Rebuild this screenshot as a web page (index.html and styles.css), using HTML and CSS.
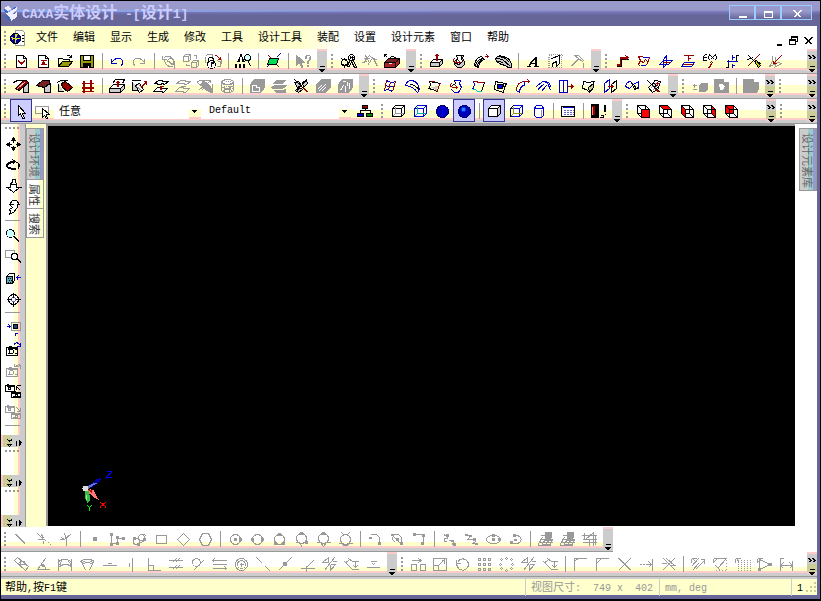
FILE: index.html
```html
<!DOCTYPE html>
<html lang="zh-CN">
<head>
<meta charset="utf-8">
<title>CAXA实体设计 - [设计1]</title>
<link rel="stylesheet" href="styles.css">
</head>
<body>
<svg class="defs" aria-hidden="true">
<symbol id="more" viewBox="-.5 -.5 8 8"><path d="M1 1h5"/><path class="K" d="M1 4h5L4 6H3z"/></symbol>
<symbol id="end" viewBox="-.5 -.5 8 20"><path d="M0 2l2 2-2 2M1 2l2 2-2 2M4 2l2 2-2 2M5 2l2 2-2 2M1 13h5"/><path class="K" d="M1 16h5l-2 2H3z"/></symbol>
<symbol id="vmore" viewBox="-.5 -.5 18 8"><path d="M3 0l2 2 2-2M3 1h4M3 5l2 2 2-2M3 5h4M12 1v5"/><path class="K" d="M15 1v5l2-3z"/></symbol>
</svg>
<header class="title">
<svg class="logo" viewBox="0 0 16 16" aria-hidden="true"><path fill="#eef" d="M1 3l4-2 4 3-4 2zM7 6l7-4v3L9 9zM2 8l5-1 3 3-3 2zM7 12l7-5v5l-6 4z"/><path fill="#36c" d="M1 4l4 2v2L2 7zM2 10l5 3v3l-4-3zM9 4l3-2 1 1-4 2z"/></svg>
<h1><span class="lat">CAXA</span>实体设计<span class="lat"> -[</span>设计<span class="lat">1]</span></h1>
<div class="winbtns">
<button aria-label="最小化"><svg viewBox="-.5 -.5 16 16"><path d="M4 10h8M4 11h8"/></svg></button>
<button aria-label="最大化"><svg viewBox="-.5 -.5 16 16"><path d="M4 5h8v6H4zM4 6h8"/></svg></button>
<button aria-label="关闭"><svg viewBox="-.5 -.5 16 16"><path d="M4 4l7 7M5 4l7 7M11 4l-7 7M12 4l-7 7"/></svg></button>
</div>
</header>

<nav class="menu">
<span class="grip"></span>
<svg class="doc" viewBox="-.5 -.5 16 16" aria-hidden="true"><path class="w g" d="M6 0h7l2 2v13H6z"/><circle cx="6" cy="8" r="5" fill="#009" stroke="#003"/><path fill="#dd3" stroke="none" d="M5 3l3 1-1 3 3 1-3 1-1 4-1-4-3-1 3-1zM1 6l2 1v2z"/><path d="M12 5h2M12 8h2M12 11h2"/></svg>
<button>文件</button><button>编辑</button><button>显示</button><button>生成</button><button>修改</button><button>工具</button><button>设计工具</button><button>装配</button><button>设置</button><button>设计元素</button><button>窗口</button><button>帮助</button>
<div class="docbtns">
<button aria-label="最小化文档"><svg viewBox="-.5 -.5 12 12"><path d="M2 9h5M2 10h5"/></svg></button>
<button aria-label="还原文档"><svg viewBox="-.5 -.5 12 12"><path d="M3 4V1h6v5H7M3 2h6M1 4h6v5H1zM1 5h6"/></svg></button>
<button aria-label="关闭文档"><svg viewBox="-.5 -.5 12 12"><path d="M2 2l7 7M3 2l7 7M9 2l-7 7M10 2l-7 7"/></svg></button>
</div>
</nav>

<div class="row">
<div class="bar" role="toolbar" aria-label="标准"><span class="grip"></span>
<button aria-label="新建设计"><svg viewBox="-.5 -.5 16 16"><path class="w" d="M3 2h7l3 3v9H3zM10 2v3h3"/><path class="r" d="M5 7l3 4 3-4M8 8v3M5 8l3 3M9 8h2"/></svg></button>
<button aria-label="新建图纸"><svg viewBox="-.5 -.5 16 16"><path class="w" d="M3 2h7l3 3v9H3zM10 2v3h3"/><path class="r" d="M5 7h6M7 8v3M8 7v4M9 8v3M5 11h6"/></svg></button>
<button aria-label="打开"><svg viewBox="-.5 -.5 16 16"><path class="y" d="M1 13V5h4l1 1h6v3"/><path class="o" d="M1 13l4-5h10l-4 5z"/><path d="M9 3q2-2 4 0l1 1M14 1v3h-3"/></svg></button>
<button aria-label="保存"><svg viewBox="-.5 -.5 16 16"><path class="o" d="M1 2h13v12H1z"/><path class="w" d="M4 2h7v5H4z"/><path class="K" d="M4 10h7v4H4z"/><path stroke="#fff" d="M9 12v2"/></svg></button>
<i class="sep"></i>
<button aria-label="撤消"><svg viewBox="-.5 -.5 16 16"><path class="b" d="M2 5v5h5M2 9l3-3q5-3 8 1 1 3-2 6M3 8l1 1"/></svg></button>
<button aria-label="重做"><svg viewBox="-.5 -.5 16 16"><path class="g" d="M13 5v5H8M13 9l-3-3Q5 3 2 7q-1 3 2 6M12 8l-1 1"/></svg></button>
<i class="sep"></i>
<button aria-label="更新"><svg viewBox="-.5 -.5 16 16"><path class="g" d="M1 2v4h4M2 5q3-4 8-1l3 4v4M3 7l1 3q3 4 8 3M13 15v-4h-4M5 6l7 6M6 9a3 3 0 1 1 4 2"/></svg></button>
<button aria-label="复制实体"><svg viewBox="-.5 -.5 16 16"><path class="g" d="M0 3l2-2h5v5l-2 2H0zM0 3h5v5M5 3l2-2M8 9l2-2h5v5l-2 2H8zM8 9h5v5M13 9l2-2M10 2h3v3M3 10v2h3"/></svg></button>
<button aria-label="锁定"><svg viewBox="-.5 -.5 16 16"><path class="g" d="M0 3l2-2h5v3M0 3v6M12 8h3v5h-4M11 8l2-2h3v4"/><path class="r" d="M9 2h2l4 4M15 3v3h-3"/><path d="M3 8V5q2-2 5 0v3"/><circle class="w" cx="6" cy="11" r="4"/><path d="M6 9v4M5 9h3M5 10h3"/></svg></button>
<i class="sep"></i>
<button aria-label="查找"><svg viewBox="-.5 -.5 16 16"><path d="M5 1h1v2H5zM4 4L2 9M7 4l2 5M3 6h1v2H3zM7 6h1v2H7zM0 11h1v3H0zM4 11h1v3H4zM8 11h1v3H8zM13 8l2 5"/><circle cx="12" cy="4" r="3" fill="#cff"/></svg></button>
<i class="sep"></i>
<button aria-label="三维球"><svg viewBox="-.5 -.5 16 16"><path class="b" d="M1 14l4-4M11 4l4-4"/><path class="r" d="M3 2l11 12"/><path d="M4 5h9l-2 6H2z" fill="#0d5"/></svg></button>
<i class="sep"></i>
<button aria-label="帮助指针"><svg viewBox="-.5 -.5 16 16"><path class="g G" d="M1 2v10l3-3 2 5h1l-1-5h3z"/><path class="g" d="M10 5V3l2-1h2l1 1v3l-2 2v2M11 5V3M14 3v3l-2 2v2M12 12h1v1h-1z"/></svg></button>
<button class="more" aria-label="更多"><svg><use href="#more"/></svg></button></div>
<div class="bar" role="toolbar" aria-label="智能"><span class="grip"></span>
<button aria-label="齿轮"><svg viewBox="-.5 -.5 16 16"><circle cx="4" cy="9" r="3"/><path d="M4 4v2M4 12v2M0 9h1M7 9h2M1 5l2 2M7 6L5 7M1 13l2-2M7 13l-2-2M9 7l-2 6h2l2-5 3 6h2l-3-7"/><circle cx="11" cy="4" r="3"/><path d="M9 4h4M10 2v3M12 2v5"/></svg></button>
<button aria-label="扳手"><svg viewBox="-.5 -.5 16 16"><path class="g" d="M1 5h6M3 2l4 7M7 2L1 9M8 3l3 2 4 8M9 6l-4 6M10 5l5 1M0 9l5-1"/></svg></button>
<button aria-label="工具箱"><svg viewBox="-.5 -.5 16 16"><path d="M5 5q2-4 7 0M0 1l3 3M0 1h2M0 1v2"/><path d="M0 9l4-4h11l-4 4z" fill="#722"/><path d="M0 9h11v5H0zM11 9l4-4v5l-4 4" fill="#a22"/><path stroke="#eee" d="M4 10h3"/></svg></button>
<button class="more" aria-label="更多"><svg><use href="#more"/></svg></button></div>
<div class="bar" role="toolbar" aria-label="特征"><span class="grip"></span>
<button aria-label="拉伸"><svg viewBox="-.5 -.5 16 16"><path class="w" d="M1 9l3-3h9l-3 3z"/><path class="S" d="M1 9h9v4H1zM10 9l3-3v4l-3 3"/><path class="r" d="M7 7V1M8 7V1M5 3l2-2h1l2 2"/></svg></button>
<button aria-label="旋转"><svg viewBox="-.5 -.5 16 16"><path class="S" d="M5 2h7l-1 3 2 3v3l-3 3H6l-3-3V8l3-3z"/><path class="w" d="M5 2h5v3l1 3-3 3-4-1 2-5z"/><path class="r" d="M3 5q-3 3 2 4h4M7 7l2 2-2 2"/></svg></button>
<button aria-label="扫描"><svg viewBox="-.5 -.5 16 16"><path class="w" d="M1 12q1-8 7-9l3 3q-5 1-6 8z"/><path class="S" d="M4 14q0-7 7-8l-1-1Q3 6 2 12z"/><path class="r" d="M11 3h4M13 1l2 2-2 2"/></svg></button>
<button aria-label="放样"><svg viewBox="-.5 -.5 16 16"><path class="S" d="M0 5q3-4 7-2l4 1q4 2 5 7v3q-3 1-6-2l-4-1q-5-2-6-6z"/><path d="M1 5l6 1 8 7M4 3l6 2 4 4M3 8l5 1"/></svg></button>
<i class="sep"></i>
<button aria-label="文字"><svg viewBox="-.5 -.5 16 16"><path d="M11 3v10M10 4v9M10 4L3 13M9 5L3 12M5 10h5M1 13h4M8 13h5"/></svg></button>
<button aria-label="雕刻"><svg viewBox="-.5 -.5 16 16"><path class="g" stroke-dasharray="1 1" d="M1 1h14M1 2h4M12 2h3M2 3v11M1 3v11M14 3v11M1 14h14"/><path class="w" d="M4 5l8-3v8l-3 3V8l-4 2v3"/></svg></button>
<button aria-label="锤子"><svg viewBox="-.5 -.5 16 16"><path class="g" d="M5 2q3-1 5 1l4 4-1 1-4-3zM8 6l-7 7M9 6l-7 7M13 10h1v4"/></svg></button>
<button class="more" aria-label="更多"><svg><use href="#more"/></svg></button></div>
<div class="bar grow" role="toolbar" aria-label="三维曲线"><span class="grip"></span>
<button aria-label="三维曲线"><svg viewBox="-.5 -.5 16 16"><path d="M2 13h5V6h7"/><path class="r" d="M2 12h4V5h7M2 11h4V4h8M11 2l3 2-3 3"/></svg></button>
<button aria-label="曲面上线"><svg viewBox="-.5 -.5 16 16"><path class="b" d="M6 3q2 2 7 1M4 13q2-2 6-1"/><path class="r" d="M6 3H2l2 4-2 4 2 2M13 4l-3 8M5 8l2 1 2-3 2 2"/></svg></button>
<button aria-label="等参数线"><svg viewBox="-.5 -.5 16 16"><path class="b" d="M1 11l4-4h9l-4 4zM8 2v9l-3 3V6z"/><path class="r" d="M5 9h6"/></svg></button>
<button aria-label="投影线"><svg viewBox="-.5 -.5 16 16"><path class="b" d="M1 13l3-4h10l-3 4z"/><path class="r" d="M3 2h10M8 2v5M7 5h3M3 11h9"/></svg></button>
<button aria-label="公式曲线"><svg viewBox="-.5 -.5 16 16"><path d="M1 7V3l2-2h1M0 4h4M0 7h4M7 1L6 4l1 3M13 1l1 3-1 3M8 2l4 4M12 2L8 6"/><path class="r" d="M5 14h2l2-4V9M7 10l2-2 2 2"/></svg></button>
<button aria-label="桥接"><svg viewBox="-.5 -.5 16 16"><path d="M1 14h3V8M12 7V2h2"/><path class="b" d="M2 8h11M8 1v5M7 4h3M8 14v-4M7 12h3M4 6v4"/></svg></button>
<button aria-label="修剪曲线"><svg viewBox="-.5 -.5 16 16"><path class="r" d="M13 1L1 13"/><path d="M2 2l12 12M1 6l6-2M11 9l4 1"/><path d="M8 8l2-1 4 5-2 2z" fill="#cc0"/></svg></button>
<button aria-label="基准面"><svg viewBox="-.5 -.5 16 16"><path class="g" d="M4 2v6l-3 5 9-4 3 1-7 4M7 3v10"/><path class="r" d="M13 2L5 10M5 7v3h3"/></svg></button>
<button class="more end" aria-label="更多"><svg><use href="#end"/></svg></button></div>
</div>

<div class="row">
<div class="bar" role="toolbar" aria-label="面编辑"><span class="grip"></span>
<button aria-label="圆角"><svg viewBox="-.5 -.5 16 16"><path d="M0 4l4-2h9"/><path class="S" d="M10 9l5-5v10h-5z"/><path class="R" d="M2 10l8-8h3l2 2-9 8z"/><path stroke="#ebb" d="M4 10l8-7"/></svg></button>
<button aria-label="倒角"><svg viewBox="-.5 -.5 16 16"><path class="S" d="M9 9l6-4v9h-6z"/><path d="M1 7l6-5h7v3L9 9z" fill="#722"/></svg></button>
<button aria-label="拔模"><svg viewBox="-.5 -.5 16 16"><path class="S" d="M0 4l3-2h7M1 5v8h5"/><path class="R" d="M4 5l4-2 7 6-5 4-5-4z"/></svg></button>
<button aria-label="筋板"><svg viewBox="-.5 -.5 16 16"><path class="r" d="M4 2v12M5 2v12M11 1v12M12 1v12M2 5h12M2 9h12M2 10h12M2 13h12"/></svg></button>
<i class="sep"></i>
<button aria-label="拉伸面"><svg viewBox="-.5 -.5 16 16"><path class="w" d="M0 10l4-4h11l-4 4zM3 5l3-4h9l-2 4"/><path class="S" d="M0 10h11v4H0zM11 10l4-4v4l-4 4"/><path class="r" d="M8 8V3M9 8V3M7 5l1-2h1l1 2"/></svg></button>
<button aria-label="拔模面"><svg viewBox="-.5 -.5 16 16"><path class="S" d="M0 2h9M1 3v9h8"/><path class="w" d="M4 7l4-2 4 6-4 3z"/><path class="g" d="M5 8l5 4M7 6l4 4"/><path class="r" d="M9 9l6-6M9 10l6-6M12 3h3v3"/></svg></button>
<button aria-label="偏移面"><svg viewBox="-.5 -.5 16 16"><path class="w" d="M1 5l4-3h3l2 1h5l-4 3-2-1-2 1zM0 13l4-4h3l2 1h5l-4 4-2-1H4z"/><path class="r" d="M7 11V7M8 11V7M6 8h4"/></svg></button>
<button aria-label="移动面"><svg viewBox="-.5 -.5 16 16"><path class="g" d="M1 5l4-3h4l2 1h4l-4 3-4-1zM0 13l4-4h3l2 1h5l-4 4-4-1zM5 8h5"/></svg></button>
<button aria-label="删除面"><svg viewBox="-.5 -.5 16 16"><path class="g G" d="M5 3l4 1 6 7-1 3-6-3-4-5z"/><path class="g" d="M0 3l3-1h10v2M2 11l4-3M0 4l12 10M12 3L4 12M15 5v9"/></svg></button>
<button aria-label="圆柱面"><svg viewBox="-.5 -.5 16 16"><path class="g" d="M2 3l4-2h5l3 2v9l-3 2H5l-3-2zM2 4l4 2h4l4-2M5 7v6M10 7v7M3 9l10 3M13 8L4 12"/><path class="g" stroke-dasharray="1 1" d="M3 6h10M4 8h9M4 10h9M6 3h6"/></svg></button>
<i class="sep"></i>
<button aria-label="面组"><svg viewBox="-.5 -.5 16 16"><path class="g G" d="M1 6l4-5h10v8l-4 5H1z"/><path stroke="#fff" d="M3 7h4v2h3v4H3z"/></svg></button>
<button aria-label="分模"><svg viewBox="-.5 -.5 16 16"><path class="g G" d="M2 5l3-3h9l-3 3zM3 12h9l2-1v3H5zM0 9l4-2h11l-4 3H1z"/></svg></button>
<button aria-label="截面"><svg viewBox="-.5 -.5 16 16"><path class="S" d="M1 4l4-1 3 4-4 2zM9 4l4-2 1 3-4 4zM2 12l4-3 3 2-4 3z"/><path d="M1 1l13 13M13 1L2 14"/><path class="r" d="M10 9l5 5M10 10l4 4"/></svg></button>
<button aria-label="抽壳"><svg viewBox="-.5 -.5 16 16"><path class="g G" d="M1 6l5-5h9v8l-5 5H1z"/><path stroke="#fff" d="M3 13l7-7M6 13l4-4M2 11l4-4"/></svg></button>
<button aria-label="合并"><svg viewBox="-.5 -.5 16 16"><path class="g G" d="M1 6l4-5h10v8l-4 5H1z"/><path stroke="#fff" d="M3 12l3-5M8 7v6M10 3v4M5 3h3M12 4v6"/></svg></button>
<button class="more" aria-label="更多"><svg><use href="#more"/></svg></button></div>
<div class="bar" role="toolbar" aria-label="曲面"><span class="grip"></span>
<button aria-label="网格面"><svg viewBox="-.5 -.5 16 16"><path class="b" d="M4 2q4 3 9 1M3 7q5 2 9 1M2 12q4-2 8 1"/><path class="r" d="M4 2L2 12M8 4L6 11M13 3l-3 10"/></svg></button>
<button aria-label="放样面"><svg viewBox="-.5 -.5 16 16"><path class="b" d="M1 7q1-5 7-5 6 2 7 9l-2 3Q9 8 1 7z"/><path d="M5 6q6 0 10 6"/></svg></button>
<button aria-label="直纹面"><svg viewBox="-.5 -.5 16 16"><path d="M3 3l5 1 6 1M2 10l4 1 5 2M3 3q2 4-1 7"/><path class="S" stroke="none" d="M4 9l8-2-2 5z"/><path class="r" d="M14 5q-3 4-3 8M4 3h4"/></svg></button>
<button aria-label="旋转面"><svg viewBox="-.5 -.5 16 16"><path class="b" d="M5 2h7l-1 3 2 4-3 5H6l-3-3"/><path d="M6 2l1 3-3 2"/><path class="r" d="M3 5q-3 3 2 4h4M7 7l2 2-2 2"/></svg></button>
<button aria-label="边界面"><svg viewBox="-.5 -.5 16 16"><path class="r" d="M3 3h3l2 1h6"/><path class="b" d="M3 3q2 4-1 8"/><path stroke="#0cc" d="M2 11h3l2 2h4"/><path d="M14 4l-3 9"/></svg></button>
<button aria-label="填充面"><svg viewBox="-.5 -.5 16 16"><path d="M3 3l4 1 7 1-2 4-1 5-9-3z"/><path class="B" d="M5 6h6l-1 4H5z"/></svg></button>
<button aria-label="导动面"><svg viewBox="-.5 -.5 16 16"><path class="r" d="M2 12Q2 4 9 3h6M13 1l2 2-2 2"/><path class="b" d="M2 12l3 2M5 14q0-6 6-8M9 3l2 3"/></svg></button>
<button aria-label="偏移曲面"><svg viewBox="-.5 -.5 16 16"><path class="b" d="M0 8l6-5 5 1 3 8M2 10l6-5M5 13l5-6M1 12l5-5M8 3l4 1 3 5"/></svg></button>
<button aria-label="延伸面"><svg viewBox="-.5 -.5 16 16"><path class="b" d="M1 2h8v12H1zM5 2v12"/><path class="r" d="M9 8h6M13 6l2 2-2 2M13 6v4"/></svg></button>
<button aria-label="曲面过渡"><svg viewBox="-.5 -.5 16 16"><path d="M3 3l5 1 6-1-3 5-2 6-3-3-4-1z"/><path d="M8 9l5-4v4l-4 5z" fill="#cc9"/></svg></button>
<button aria-label="裁剪面"><svg viewBox="-.5 -.5 16 16"><path class="b" d="M2 5v9l5-4V1z"/><path d="M9 6v8l5-4V2z"/><path class="r" d="M5 8h6M9 6l2 2-2 2"/></svg></button>
<button aria-label="缝合面"><svg viewBox="-.5 -.5 16 16"><path class="b" d="M1 8q1-5 5-5l3 3-4 4zM9 6l5-3v7"/><path d="M7 4l3 7 4-2M9 6l3 4"/></svg></button>
<button aria-label="还原面"><svg viewBox="-.5 -.5 16 16"><path class="w" d="M8 2l6 1-2 6-6-2zM2 9l5-5 5 6-6 4z"/><path d="M1 2l13 12"/><path class="g" d="M4 10l5-5M6 12l5-5"/><path class="r" d="M9 5h4M8 10l5 4M11 3v4"/></svg></button>
<button class="more" aria-label="更多"><svg><use href="#more"/></svg></button></div>
<div class="bar" role="toolbar" aria-label="布尔"><span class="grip"></span>
<button aria-label="加减"><svg viewBox="-.5 -.5 16 16"><path class="g" d="M1 7h4M3 5v4M1 11h4"/><path class="g G" d="M8 7l2-2h6v6l-2 2H8z"/></svg></button>
<button aria-label="求差"><svg viewBox="-.5 -.5 16 16"><path class="g G" d="M1 1h9v3h5v10H1z"/><path class="w" stroke="#fff" d="M6 6h3l2 2-2 3H7z"/></svg></button>
<i class="sep"></i>
<button aria-label="求和"><svg viewBox="-.5 -.5 16 16"><path class="g G" d="M0 1h10v3h5v7l-2 3H0z"/></svg></button>
<button class="more end" aria-label="更多"><svg><use href="#end"/></svg></button></div>
<div class="bar grow" role="toolbar" aria-label="附加"><span class="grip"></span><button class="more end" aria-label="更多"><svg><use href="#end"/></svg></button></div>
</div>

<div class="row">
<div class="bar pick" role="toolbar" aria-label="选择"><span class="grip"></span>
<button class="on" aria-label="选择"><svg viewBox="-.5 -.5 16 16"><path class="w" d="M5 2v10l2-2 2 5h2l-2-5h3z"/></svg></button>
<button aria-label="框选"><svg viewBox="-.5 -.5 16 16"><path class="g" d="M0 3h13v7H0z"/><path class="w" d="M7 5v9l2-2 2 3h1l-1-4h3z"/></svg></button>
<select class="combo" aria-label="选择过滤"><option>任意</option></select>
<select class="combo lat" aria-label="样式"><option>Default</option></select>
<button aria-label="设计树"><svg viewBox="-.5 -.5 16 16"><path d="M8 5v2M3 10V7h10v3"/><path class="R" d="M5 2h5v3H5z"/><path class="B" d="M0 10h6v3H0z"/><path d="M9 10h6v3H9z" fill="#080"/></svg></button>
</div>
<div class="bar" role="toolbar" aria-label="显示"><span class="grip"></span>
<button aria-label="线框"><svg viewBox="-.5 -.5 16 16"><path class="w" d="M2 5l3-3h9v8l-3 3H2zM2 5h9v8M11 5l3-3"/><path class="g" d="M5 3v7h8M5 10l-3 3"/></svg></button>
<button aria-label="隐藏线"><svg viewBox="-.5 -.5 16 16"><path class="w b" d="M2 5l3-3h9v8l-3 3H2zM2 5h9v8M11 5l3-3"/><path stroke="#0aa" d="M5 3v7h8M5 10l-3 3"/></svg></button>
<button aria-label="着色"><svg viewBox="-.5 -.5 16 16"><circle cx="8" cy="8" r="6" fill="#00b" stroke="#006"/><path stroke="#00f" d="M8 3v10"/></svg></button>
<button class="on" aria-label="光滑着色"><svg viewBox="-.5 -.5 16 16"><circle cx="8" cy="8" r="6" fill="#00b" stroke="#006"/><circle cx="7" cy="6" r="2" fill="#28f" stroke="#03e"/></svg></button>
<i class="sep"></i>
<button class="on" aria-label="实体"><svg viewBox="-.5 -.5 16 16"><path class="w" d="M2 5l3-3h9v8l-3 3H2z"/><path class="S" d="M11 5l3-3v8l-3 3z"/><path d="M2 5h9"/></svg></button>
<button aria-label="透视"><svg viewBox="-.5 -.5 16 16"><path class="w b" d="M2 5l3-3h9v8l-3 3H2zM2 5h9v8M11 5l3-3"/><path stroke="#990" d="M5 3v7h8M5 10l-3 3"/><path d="M2 13V5l3-3"/></svg></button>
<button aria-label="圆柱"><svg viewBox="-.5 -.5 16 16"><path class="w b" d="M4 4l2-2h5l2 2v8l-2 2H6l-2-2zM4 4l2 1h5l2-1"/><path class="g" d="M11 6v7"/></svg></button>
<i class="sep"></i>
<button aria-label="属性表"><svg viewBox="-.5 -.5 16 16"><path class="w" d="M1 3h13v10H1z"/><path class="b" d="M2 4h11"/><path stroke="#66c" stroke-dasharray="2 1" d="M3 7h10M3 9h10M3 11h10"/></svg></button>
<i class="sep"></i>
<button aria-label="渲染"><svg viewBox="-.5 -.5 16 16"><path class="K" d="M1 1h7v13H1z"/><path class="R" d="M1 2h4v10H1z"/><path d="M9 14h4M10 12h3v2M14 1v7M15 1v7M14 11h1"/><path stroke="#f88" d="M2 3v8"/></svg></button>
<button class="more" aria-label="更多"><svg><use href="#more"/></svg></button></div>
<div class="bar view" role="toolbar" aria-label="视向"><span class="grip"></span>
<button aria-label="前视"><svg viewBox="-.5 -.5 16 16"><path class="w" d="M2 2h8l4 4v8H6l-4-4zM2 2l4 4h8M6 6v8M10 2v8H2M10 10l4 4"/><path class="F" d="M6 6h8v8H6z"/></svg></button>
<button aria-label="俯视"><svg viewBox="-.5 -.5 16 16"><path class="w" d="M2 2h8l4 4v8H6l-4-4zM6 6v8M10 2v8H2M10 10l4 4"/><path class="F" d="M2 2h8l4 4H6z"/></svg></button>
<button aria-label="左视"><svg viewBox="-.5 -.5 16 16"><path class="w" d="M2 2h8l4 4v8H6l-4-4zM6 6h8M10 2v8H2M10 10l4 4"/><path class="F" d="M2 2l4 4v8l-4-4z"/></svg></button>
<button aria-label="右视"><svg viewBox="-.5 -.5 16 16"><path class="w" d="M2 2h8l4 4v8H6l-4-4zM10 10H2"/><path class="F" d="M10 2l4 4v8l-4-4z"/><path d="M2 2l4 4h8M6 6v8"/></svg></button>
<button aria-label="后视"><svg viewBox="-.5 -.5 16 16"><path class="w" d="M2 2h8l4 4v8H6l-4-4z"/><path class="F" d="M2 2h8v8H2z"/><path d="M2 2l4 4h8M6 6v8M10 10l4 4"/></svg></button>
<button class="more end" aria-label="更多"><svg><use href="#end"/></svg></button></div>
<div class="bar grow" role="toolbar" aria-label="附加视图"><span class="grip"></span><button class="more end" aria-label="更多"><svg><use href="#end"/></svg></button></div>
</div>

<div class="work">
<div class="side">
<div class="vbar" role="toolbar" aria-label="视图"><span class="vgrip"></span>
<button aria-label="平移"><svg viewBox="-.5 -.5 16 16"><path class="K" d="M8 1l2 3H6zM8 14l2-3H6zM1 8l3-2v4zM15 8l-3-2v4z"/><path d="M8 4v2M8 9v2M4 8h2M10 8h2"/></svg></button>
<button aria-label="旋转视图"><svg viewBox="-.5 -.5 16 16"><path d="M10 12q-9 0-9-4 1-4 8-4 6 1 5 5l-2 2M10 11q-8 0-8-3 1-3 7-3M7 2l3 2-3 3M13 6v5"/></svg></button>
<button aria-label="前后缩放"><svg viewBox="-.5 -.5 16 16"><path class="w" d="M7 1h3v3l1 1v4h3l-6 5-6-5h3V5l2-1zM0 9h3M13 9h3M5 6h6"/></svg></button>
<button aria-label="行走"><svg viewBox="-.5 -.5 16 16"><path class="w" d="M4 5l3-4h4l3 4h-2q1 3-2 5l-1 2-5 3 1-3-1-2 3-2-2-2q1-2 3-1z"/></svg></button>
<i class="vsep"></i>
<button aria-label="缩放"><svg viewBox="-.5 -.5 16 16"><circle cx="5" cy="5" r="4" fill="#cff"/><path d="M8 8l6 6M9 8l5 5"/></svg></button>
<button aria-label="窗口缩放"><svg viewBox="-.5 -.5 16 16"><path class="g" d="M0 1h9v7H0z"/><circle class="w" cx="9" cy="7" r="3"/><path d="M11 9l5 5M12 9l4 4"/></svg></button>
<button aria-label="指定面"><svg viewBox="-.5 -.5 16 16"><path class="w" d="M1 6l3-3h5v7l-2 3H1z"/><path d="M1 6h6v7H1z" fill="#5ab"/><path stroke-dasharray="1 1" d="M2 8h5M3 10h4M2 12h5"/><path class="b" d="M15 7h-4M13 5l-2 2 2 2M12 6v3"/></svg></button>
<button aria-label="对准"><svg viewBox="-.5 -.5 16 16"><circle class="w" cx="8" cy="8" r="5"/><circle cx="8" cy="8" r="2" stroke="#66a"/><path d="M8 1v5M8 10v5M1 8h5M10 8h5"/></svg></button>
<i class="vsep"></i>
<button aria-label="适应窗口"><svg viewBox="-.5 -.5 16 16"><path class="g" d="M6 2h9v8H6z"/><path d="M8 4h4v4H8z" fill="#246"/><path class="b" d="M1 6h4M3 4l2 2-2 2M10 15v-3M9 13h3"/></svg></button>
<button aria-label="下一视图"><svg viewBox="-.5 -.5 16 16"><path d="M1 6h11v8H1zM3 5h3M2 7h9M2 8h2M9 8h2M2 12h2M9 12h2"/><circle cx="6" cy="10" r="2"/><path class="b" d="M8 4q2-4 5-2l2 2M15 1v4h-4"/></svg></button>
<button aria-label="上一视图"><svg viewBox="-.5 -.5 16 16"><path class="g" d="M1 6h11v8H1zM3 5h3M2 7h9M2 12h2M9 12h2M15 7q1-4-2-5l-3 2M9 1v3h4"/><circle class="g" cx="6" cy="10" r="2"/></svg></button>
<button aria-label="保存视图"><svg viewBox="-.5 -.5 16 16"><path d="M0 2h9v6H0zM1 1h2M1 3h7M11 2h4M11 2v4M11 3l4 4"/><path class="w" d="M6 9h9v5H6z"/><path d="M6 10h9M7 8h3M7 13h2M12 13h2"/><circle cx="4" cy="5" r="1"/><circle cx="11" cy="12" r="1"/></svg></button>
<button aria-label="恢复视图"><svg viewBox="-.5 -.5 16 16"><path class="g" d="M0 2h9v6H0zM1 1h2M1 3h7M11 3l4 4M15 3v4h-4M6 9h9v5H6zM6 10h9M7 13h2"/><circle class="g" cx="4" cy="5" r="1"/><circle class="g" cx="11" cy="12" r="1"/></svg></button>
<i class="vsep"></i>
<button class="vmore" aria-label="更多"><svg><use href="#vmore"/></svg></button></div>
<div class="vbar short" role="toolbar" aria-label="空栏一"><span class="vgrip"></span><button class="vmore" aria-label="更多"><svg><use href="#vmore"/></svg></button></div>
<div class="vbar short" role="toolbar" aria-label="空栏二"><span class="vgrip"></span><button class="vmore" aria-label="更多"><svg><use href="#vmore"/></svg></button></div>
</div>
<div class="tabs left"><button class="sel">设计环境</button><button>属性</button><button>搜索</button></div>
<main class="canvas">
<svg class="triad" viewBox="-.5 -.5 32 42" role="img" aria-label="坐标轴"><g stroke="none"><path d="M5 17l8-5 1-2 6-2-2 4-5 4-8 4z" fill="#00a"/><path d="M5 17l8-4 2 1-8 5z" fill="#67c"/><path d="M7 19l5 2 5 9-5-2-4-4z" fill="#f77"/><path d="M7 19l3 2 1 3-4-3z" fill="#d00"/><path d="M3 20h4l2 10-3 4-3-6z" fill="#3b4"/><path d="M4 21l1 9h1z" fill="#9e9"/><circle cx="4" cy="19" r="3" fill="#ddd"/></g><path stroke="#00f" d="M25 2h5v1l-5 4v1h5"/><path stroke="#f00" d="M19 32v1l5 4v1M24 32v1l-5 4v1"/><path stroke="#0f0" d="M6 35v1l2 2 2-2v-1M8 38v3"/></svg>
</main>
<div class="tabs right"><button class="sel">设计元素库</button></div>
</div>

<div class="row low">
<div class="bar dim" role="toolbar" aria-label="绘制"><span class="grip"></span>
<button aria-label="直线"><svg viewBox="-.5 -.5 16 16"><path d="M2 3l10 10M3 3l9 9"/></svg></button>
<button aria-label="切线"><svg viewBox="-.5 -.5 16 16"><path d="M2 2l6 6H2M8 8l3 1M6 3l2 4M8 9v3M12 11h1M14 13h1"/></svg></button>
<button aria-label="法线"><svg viewBox="-.5 -.5 16 16"><path d="M2 8h5l7-6M7 2l2 6v6M4 6l3 2"/></svg></button>
<i class="sep"></i>
<button aria-label="点"><svg viewBox="-.5 -.5 16 16"><path class="G" d="M6 6h3v3H6z"/></svg></button>
<button aria-label="连续线"><svg viewBox="-.5 -.5 16 16"><path class="G" d="M1 2h2v2H1zM1 12h2v2H1zM7 11h2v2H7zM7 5h2v2H7zM13 6h2v2h-2z"/><path d="M2 4v8M3 12h4M8 7v4M9 7h4"/></svg></button>
<button aria-label="双切圆"><svg viewBox="-.5 -.5 16 16"><circle cx="5" cy="10" r="3"/><circle cx="10" cy="6" r="3"/><path d="M9 3h4l2 2M8 11l5-1"/><path class="G" d="M2 6h2v2H2zM6 12h2v2H6zM12 7h2v2h-2z"/></svg></button>
<button aria-label="矩形"><svg viewBox="-.5 -.5 16 16"><path d="M3 4h10v8H3z"/></svg></button>
<button aria-label="菱形"><svg viewBox="-.5 -.5 16 16"><path d="M8 2l6 6-6 6-6-6z"/></svg></button>
<button aria-label="多边形"><svg viewBox="-.5 -.5 16 16"><path d="M5 2h6l3 6-3 6H5L2 8z"/></svg></button>
<i class="sep"></i>
<button aria-label="圆"><svg viewBox="-.5 -.5 16 16"><circle cx="8" cy="8" r="5"/><path class="G" d="M7 7h2v2H7zM12 7h2v2h-2z"/></svg></button>
<button aria-label="两点圆"><svg viewBox="-.5 -.5 16 16"><circle cx="8" cy="8" r="5"/><path class="G" d="M2 7h2v2H2zM12 7h2v2h-2z"/></svg></button>
<button aria-label="三点圆"><svg viewBox="-.5 -.5 16 16"><circle cx="8" cy="8" r="5"/><path class="G" d="M7 2h2v2H7zM3 11h2v2H3zM11 11h2v2h-2z"/></svg></button>
<button aria-label="一切两点圆"><svg viewBox="-.5 -.5 16 16"><circle cx="8" cy="7" r="5"/><path class="G" d="M7 1h2v2H7zM12 10h2v2h-2z"/><path d="M2 11h3l3 3v1"/></svg></button>
<button aria-label="两切一点圆"><svg viewBox="-.5 -.5 16 16"><circle cx="8" cy="7" r="5"/><path class="G" d="M7 1h2v2H7z"/><path d="M1 11h4l3 4 3-4h4"/></svg></button>
<button aria-label="三切圆"><svg viewBox="-.5 -.5 16 16"><circle cx="8" cy="8" r="5"/><path d="M4 1l2 2h4l2-2M1 12h4l1 2h4l1-2h4"/></svg></button>
<i class="sep"></i>
<button aria-label="圆弧"><svg viewBox="-.5 -.5 16 16"><path class="G" d="M2 6h2v1H2zM11 11h2v2h-2z"/><path d="M3 3h6l3 3v5"/></svg></button>
<button aria-label="半圆弧"><svg viewBox="-.5 -.5 16 16"><path d="M3 4l8 8M4 3h5l3 3v5M3 5v3l3 3"/><path class="G" d="M2 3h2v1H2zM11 11h2v2h-2zM7 7h2v2H7z"/></svg></button>
<button aria-label="三点弧"><svg viewBox="-.5 -.5 16 16"><path d="M3 3h8l1 1v7"/><path class="G" d="M2 2h2v2H2zM11 3h2v2h-2zM10 11h2v2h-2z"/></svg></button>
<i class="sep"></i>
<button aria-label="样条"><svg viewBox="-.5 -.5 16 16"><path d="M3 2v2h3v3H3v3h2M7 9h3l2 1-1 3h2"/><path class="G" d="M5 3h2v2H5zM10 9h2v1h-2zM12 12h2v2h-2z"/></svg></button>
<button aria-label="B样条"><svg viewBox="-.5 -.5 16 16"><path d="M3 3l4 2-3 3h6l2 2-3 2h3"/><path class="G" d="M2 3h2v1H2zM10 7h2v2h-2zM12 12h2v1h-2zM7 4h1v1H7z"/></svg></button>
<button aria-label="椭圆"><svg viewBox="-.5 -.5 16 16"><ellipse cx="8" cy="8" rx="7" ry="4"/><path class="G" d="M7 3h2v2H7zM7 7h2v2H7zM13 7h2v2h-2z"/></svg></button>
<button aria-label="椭圆弧"><svg viewBox="-.5 -.5 16 16"><path d="M7 4h3q5 2 3 6-4 4-9 1"/><path class="G" d="M6 3h2v2H6zM3 10h2v2H3zM7 8h2v1H7z"/></svg></button>
<i class="sep"></i>
<button aria-label="投影"><svg viewBox="-.5 -.5 16 16"><path class="G" d="M8 1h6v5l-3 2-3-2z"/><path d="M3 4h4M2 8h13M1 11h14M0 14h13M0 14l5-8M4 14l5-8M8 14l5-8M12 14l3-6M6 9h7M5 13h7"/></svg></button>
<button aria-label="相关投影"><svg viewBox="-.5 -.5 16 16"><path class="G" d="M8 1h6v5l-3 2-3-2z"/><path d="M3 4h4M2 8h13M1 11h14M0 14h13M0 14l5-8M4 14l5-8M8 14l5-8M12 14l3-6M6 9h7M5 13h7"/></svg></button>
<button aria-label="构造线"><svg viewBox="-.5 -.5 16 16"><path d="M0 4h15M3 1v7M12 0v14M1 8h14M1 11h14M4 8l8-7M8 8v6M14 4v9"/></svg></button>
<button class="more" aria-label="更多"><svg><use href="#more"/></svg></button></div>
<div class="blank"></div>
</div>

<div class="row low">
<div class="bar dim" role="toolbar" aria-label="约束"><span class="grip"></span>
<button aria-label="智能标注"><svg viewBox="-.5 -.5 16 16"><path d="M1 4l3-3 11 9-3 4zM7 5h4v3H7zM5 7l2-2"/></svg></button>
<button aria-label="角度约束"><svg viewBox="-.5 -.5 16 16"><path d="M10 2L2 13h12M6 7q4 2 4 6M5 9l4 1"/></svg></button>
<button aria-label="弧长约束"><svg viewBox="-.5 -.5 16 16"><path d="M1 2v12M14 2v12M1 5q6-4 13 0M2 10q6-4 12 0M4 5L2 8l3 1M11 5l3 3-3 1"/></svg></button>
<button aria-label="弧角约束"><svg viewBox="-.5 -.5 16 16"><path d="M1 5q6-5 14 0M3 8q5-4 10 0M2 5l4 9M14 5l-4 9M2 8l2-3 3 1M14 8l-2-3-3 1"/></svg></button>
<button aria-label="水平约束"><svg viewBox="-.5 -.5 16 16"><path d="M1 9h14M6 7h4"/></svg></button>
<button aria-label="竖直约束"><svg viewBox="-.5 -.5 16 16"><path d="M9 1v14M6 6v4"/></svg></button>
<button aria-label="垂直约束"><svg viewBox="-.5 -.5 16 16"><path d="M3 1v13h12M3 9h5v5"/></svg></button>
<button aria-label="平行约束"><svg viewBox="-.5 -.5 16 16"><path d="M1 4h14M1 11h14M5 6l4-4M8 6l4-4M5 13l4-4M8 13l4-4"/></svg></button>
<button aria-label="相切约束"><svg viewBox="-.5 -.5 16 16"><circle cx="7" cy="6" r="4"/><path d="M14 4L4 14"/></svg></button>
<button aria-label="等长约束"><svg viewBox="-.5 -.5 16 16"><path d="M1 4h14M1 8h14M1 12h14M3 2L1 4l2 2M13 10l2 2-2 2"/></svg></button>
<button aria-label="同心约束"><svg viewBox="-.5 -.5 16 16"><circle cx="8" cy="8" r="6"/><circle cx="8" cy="8" r="4"/><path d="M8 6v4M6 8h4"/></svg></button>
<button aria-label="共线约束"><svg viewBox="-.5 -.5 16 16"><path d="M1 1l6 6M10 10l5 5"/></svg></button>
<button aria-label="重合约束"><svg viewBox="-.5 -.5 16 16"><path d="M14 1L1 14"/><path class="G" d="M6 6h3v3H6z"/></svg></button>
<button aria-label="中点约束"><svg viewBox="-.5 -.5 16 16"><path d="M1 12h14M14 4l-8 8M7 9v6"/></svg></button>
<button aria-label="镜像约束"><svg viewBox="-.5 -.5 16 16"><path d="M13 1L3 14M1 6h6V1zM9 8h5M9 8v6l5-6M11 5h4"/></svg></button>
<button aria-label="偏移约束"><svg viewBox="-.5 -.5 16 16"><path d="M1 5l8 8h6M5 2l4 3h6M12 5v6M10 9l2 2 2-2M6 3l-4 4M3 4v3"/></svg></button>
<button aria-label="固定"><svg viewBox="-.5 -.5 16 16"><path d="M1 11h13M5 5h6M7 7l1 1 1-1"/></svg></button>
<button class="more" aria-label="更多"><svg><use href="#more"/></svg></button></div>
<div class="bar dim grow" role="toolbar" aria-label="修改"><span class="grip"></span>
<button aria-label="移动"><svg viewBox="-.5 -.5 16 16"><path d="M1 8h5v6H1zM10 8h5v6h-5zM1 4h9M8 2l3 2-3 2"/></svg></button>
<button aria-label="缩放曲线"><svg viewBox="-.5 -.5 16 16"><path d="M1 2h13v12H1zM1 9h5v5M6 9l6-6M9 4h3v3"/></svg></button>
<button aria-label="旋转曲线"><svg viewBox="-.5 -.5 16 16"><path d="M2 3v4h4M3 6q3-5 8-3 5 4 2 8-4 5-9 1l-2-4"/></svg></button>
<button aria-label="线性阵列"><svg viewBox="-.5 -.5 16 16"><path d="M2 2h2v2H2zM7 2h2v2H7zM12 2h2v2h-2zM2 7h2v2H2zM7 7h2v2H7zM12 7h2v2h-2zM2 12h2v2H2zM7 12h2v2H7zM12 12h2v2h-2z"/></svg></button>
<button aria-label="圆形阵列"><svg viewBox="-.5 -.5 16 16"><path d="M7 2l1-1 1 1-1 1zM12 3l1-1 1 1-1 1zM13 8l1-1 1 1-1 1zM12 12l1-1 1 1-1 1zM7 14l1-1 1 1-1 1zM2 12l1-1 1 1-1 1zM1 8l1-1 1 1-1 1zM2 3l1-1 1 1-1 1z"/></svg></button>
<button aria-label="镜像"><svg viewBox="-.5 -.5 16 16"><path d="M13 1L3 14M1 6h6V1zM9 8h5M9 8v6l5-6M11 5h4"/></svg></button>
<button aria-label="偏移"><svg viewBox="-.5 -.5 16 16"><path d="M1 5l8 8h6M5 2l4 3h6M12 5v6M10 9l2 2 2-2M6 3l-4 4M3 4v3"/></svg></button>
<i class="sep"></i>
<button aria-label="圆角过渡"><svg viewBox="-.5 -.5 16 16"><path d="M2 14V2h12M2 7q0-5 6-5"/></svg></button>
<button aria-label="倒角过渡"><svg viewBox="-.5 -.5 16 16"><path d="M2 14V2h12M2 7l5-5"/></svg></button>
<button aria-label="裁剪"><svg viewBox="-.5 -.5 16 16"><path d="M2 2l12 12M3 2l12 12M14 2L2 14"/></svg></button>
<button aria-label="延伸"><svg viewBox="-.5 -.5 16 16"><path d="M14 2v12M9 8h4M10 5l3 3-3 3"/><path stroke-dasharray="2 1" d="M1 8h8"/></svg></button>
<button aria-label="打断"><svg viewBox="-.5 -.5 16 16"><path d="M3 2l12 12M14 2L2 14M1 7h5M6 2l8 7M10 9h5"/></svg></button>
<i class="sep"></i>
<button aria-label="显示端点"><svg viewBox="-.5 -.5 16 16"><path d="M1 2h5M1 2v4M1 10L8 2M5 13l9-9M10 3h4v4M2 14l6-7M3 3l3 3"/></svg></button>
<button aria-label="显示尺寸"><svg viewBox="-.5 -.5 16 16"><path d="M1 2h13L5 12M1 2v4l3-3M3 9l5 5"/><path stroke-dasharray="1 2" d="M14 3v11H3"/></svg></button>
<button aria-label="栅格"><svg viewBox="-.5 -.5 16 16"><path d="M1 2h5M1 2v4M2 2l3 4"/><path stroke-dasharray="1 2" d="M6 4h10M3 6h13M3 8h13M3 10h13M3 12h13M3 14h13"/></svg></button>
<button aria-label="捕捉"><svg viewBox="-.5 -.5 16 16"><path d="M1 2h5M1 2v4l3-3M3 3l11 5-11 5V4"/><path class="G" d="M12 7h3v2h-3zM2 12h2v2H2z"/></svg></button>
<button aria-label="尺寸"><svg viewBox="-.5 -.5 16 16"><path d="M1 2h4M2 2v12M14 4v10M2 9h12M5 6L2 9l3 3M11 6l3 3-3 3"/></svg></button>
<button class="more end" aria-label="更多"><svg><use href="#end"/></svg></button></div>
</div>

<footer class="status">
<span class="hint">帮助<span class="lat">,</span>按<span class="lat">F1</span>键</span>
<span class="cell size">视图尺寸<span class="lat">:&nbsp; 749 x&nbsp; 402</span></span>
<span class="cell unit"><span class="lat">mm, deg</span></span>
<span class="cell num"><span class="lat">1</span></span>
<svg class="corner" viewBox="0 0 12 12" aria-hidden="true"><path fill="#cc9" stroke="none" d="M9 1h2v2H9zM5 5h2v2H5zM9 5h2v2H9zM1 9h2v2H1zM5 9h2v2H5zM9 9h2v2H9z"/></svg>
</footer>
</body>
</html>
```
FILE: styles.css
```css
* { box-sizing: border-box; }

html { height: 100%; background: #000; }

body {
  margin: 0;
  height: 100%;
  display: flex;
  flex-direction: column;
  overflow: hidden;
  border: solid #000;
  border-width: 1px 1px 2px;
  background: #fff;
  color: #000;
  font: 11px/14px "Noto Sans CJK SC", sans-serif;
  box-shadow: inset -3px 0 #669, inset 0 -4px #669;
  padding: 0 3px 4px 0;
}

button {
  margin: 0;
  padding: 0;
  border: 0;
  background: none;
  color: inherit;
  font: inherit;
}

svg {
  display: block;
  overflow: visible;
  fill: none;
  stroke: #000;
  shape-rendering: crispEdges;
}
.defs { position: absolute; width: 0; height: 0; }

.lat { font-family: "Liberation Mono", monospace; font-size: 10px; }

/* icon colours: lower case strokes, upper case fills */
.r { stroke: #900; }
.b { stroke: #00c; }
.g { stroke: #999; }
.w { fill: #fff; }
.K { fill: #000; }
.R { fill: #900; }
.B { fill: #00c; }
.G { fill: #999; }
.S { fill: #ccc; }
.F { fill: #f00; }
.o { fill: #990; }
.y { fill: #ffc; }

/* title bar */
.title {
  flex: none;
  height: 25px;
  margin-right: -3px;
  padding: 0 8px 2px 2px;
  display: flex;
  align-items: center;
  background:
    linear-gradient(90deg, #8ae, #99c0 70%) 0 9px / 100% 2px no-repeat,
    linear-gradient(#99c 9px, #77b 11px, #669 14px);
  color: #ccf;
}
.logo { width: 16px; height: 16px; stroke: none; }
.title h1 {
  flex: 1;
  margin: 0 0 0 3px;
  font-size: 16px;
  line-height: 20px;
  font-weight: 700;
  white-space: pre;
}
.title .lat { font-size: 13px; }
.winbtns { display: flex; }
.winbtns button {
  width: 26px;
  height: 15px;
  display: grid;
  place-items: center;
  border: 1px solid #9cf;
  background: linear-gradient(#99c 40%, #669);
}
.winbtns button:last-child { width: 31px; }
.winbtns svg { width: 16px; height: 16px; stroke: #fff; }

/* menu */
.menu {
  flex: none;
  height: 23px;
  display: flex;
  align-items: center;
  background: linear-gradient(90deg, #ffc 300px, #fff 345px);
}
.menu > button { padding: 0 8px 4px 7px; }
.doc { width: 16px; height: 16px; margin-right: 4px; }
.docbtns { margin: 6px 3px 0 auto; display: flex; gap: 2px; }
.docbtns svg { width: 12px; height: 12px; }

/* toolbars */
.row {
  flex: none;
  height: 25px;
  display: flex;
  background: linear-gradient(#fff 11px, #ffc 11px 19px, #fcc 19px 21px, #ccc 21px 24px, #999 24px);
}
.bar { display: flex; align-items: flex-start; }
.bar:first-child { margin-left: -1px; }
.bar.grow { flex: 1; }
.bar > button { width: 22px; height: 23px; display: grid; place-items: center; }
.bar > button svg { width: 16px; height: 16px; }
.grip {
  flex: none;
  width: 2px;
  height: 14px;
  margin: 5px 4px;
  background: repeating-linear-gradient(#999 0 2px, transparent 2px 4px);
}
.menu .grip { margin: 0 3px; }
.sep { flex: none; width: 1px; height: 16px; margin: 4px 3px 0 4px; background: #999; }
.bar > .on { border: 1px solid #339; background: #ccf; }
.bar > .more {
  width: 10px;
  height: 24px;
  margin-left: 3px;
  align-items: end;
  border-top: 2px solid #fcc;
  background: #ccc;
}
.bar > .more svg { width: 8px; height: 8px; }
.bar > .end { background: linear-gradient(#ccc 10px, #cc9 10px 18px, #fcc 18px 20px, #ccc 20px); }
.bar > .end svg { height: 20px; }
.bar > .end, .grow > .end { margin-left: auto; }
.pick { margin-right: 1px; }
.view { width: 154px; }
.row .bar:not(.view):not(.grow) > .end { margin-left: 3px; }

.combo {
  width: 147px;
  height: 17px;
  margin-top: 3px;
  padding: 0 5px;
  appearance: none;
  border: 0;
  border-radius: 0;
  background:
    linear-gradient(#000, #000) right 4px top 8px / 5px 1px no-repeat,
    linear-gradient(#000, #000) right 5px top 9px / 3px 1px no-repeat,
    linear-gradient(#000, #000) right 6px top 10px / 1px 1px no-repeat,
    linear-gradient(#ffc 8px, #fcc 8px) right top 7px / 12px 10px no-repeat,
    #fff;
  color: #000;
  font: 11px/15px "Noto Sans CJK SC", sans-serif;
}
.combo.lat {
  width: 150px;
  margin-right: 3px;
  padding-left: 8px;
  font: 10px/15px "Liberation Mono", monospace;
}

/* work area */
.work { flex: 1; min-height: 0; display: flex; }
.side { flex: none; width: 25px; display: flex; flex-direction: column; }
.vbar {
  display: flex;
  flex-direction: column;
  align-items: flex-start;
  background: linear-gradient(90deg, #fff 13px, #ffc 13px 17px, #fcc 17px 19px, #ccc 19px 24px, #999 24px);
}
.vbar > button { width: 23px; height: 21px; display: grid; place-items: center; }
.vbar > button svg { width: 16px; height: 16px; }
.vgrip {
  flex: none;
  width: 14px;
  height: 2px;
  margin: 3px 4px 4px;
  background: repeating-linear-gradient(90deg, #999 0 2px, transparent 2px 4px);
}
.vsep { width: 15px; height: 1px; margin: 3px 0 4px 4px; background: #999; }
.vbar > .vmore {
  width: 24px;
  height: 12px;
  margin-top: auto;
  align-items: end;
  background: linear-gradient(90deg, #fcc 2px, #cc9 2px 10px, #ccc 10px);
}
.vbar > .vmore svg { width: 18px; height: 8px; }
.vbar:first-child { flex: 1; min-height: 0; }
.short { height: 40px; }

.tabs { flex: none; display: flex; flex-direction: column; align-items: flex-start; padding-top: 4px; }
.tabs.left { width: 20px; background: #ffc; }
.tabs.right { width: 22px; padding-left: 4px; }
.tabs button {
  width: 18px;
  padding: 4px 0 2px;
  writing-mode: vertical-rl;
  text-orientation: sideways;
  border: 1px solid #999;
  border-top-width: 0;
  background: linear-gradient(90deg, #fff 12px, #ffc 12px);
  color: #333;
  line-height: 16px;
}
.tabs button:first-child { border-top-width: 1px; }
.tabs .sel { background: linear-gradient(90deg, #ccc 8px, #9cc 8px 13px, #99c 13px); color: #666; }

.canvas {
  flex: 1;
  min-width: 0;
  display: flex;
  align-items: flex-end;
  margin-bottom: 1px;
  padding: 0 0 15px 33px;
  border: solid #999;
  border-width: 2px 0 0 2px;
  background: #000;
}
.triad { width: 32px; height: 42px; }

/* sketch toolbars */
.low { background: linear-gradient(#fff 15px, #ffc 15px 19px, #fcc 19px 21px, #ccc 21px 24px, #999 24px); }
.blank { flex: 1; background: #fff; }
.dim > button:not(.more) svg { stroke: #999; }

/* status bar */
.status {
  flex: none;
  height: 18px;
  display: flex;
  align-items: center;
  border-top: 2px solid #ccc;
  background: #ffc;
  line-height: 14px;
  white-space: nowrap;
}
.hint { flex: 1; padding-left: 4px; }
.cell { padding-left: 5px; border-left: 1px solid #ccc; color: #999; }
.size { width: 134px; }
.unit { width: 132px; }
.num { width: 14px; color: #000; }
.corner { width: 12px; height: 12px; }
```
